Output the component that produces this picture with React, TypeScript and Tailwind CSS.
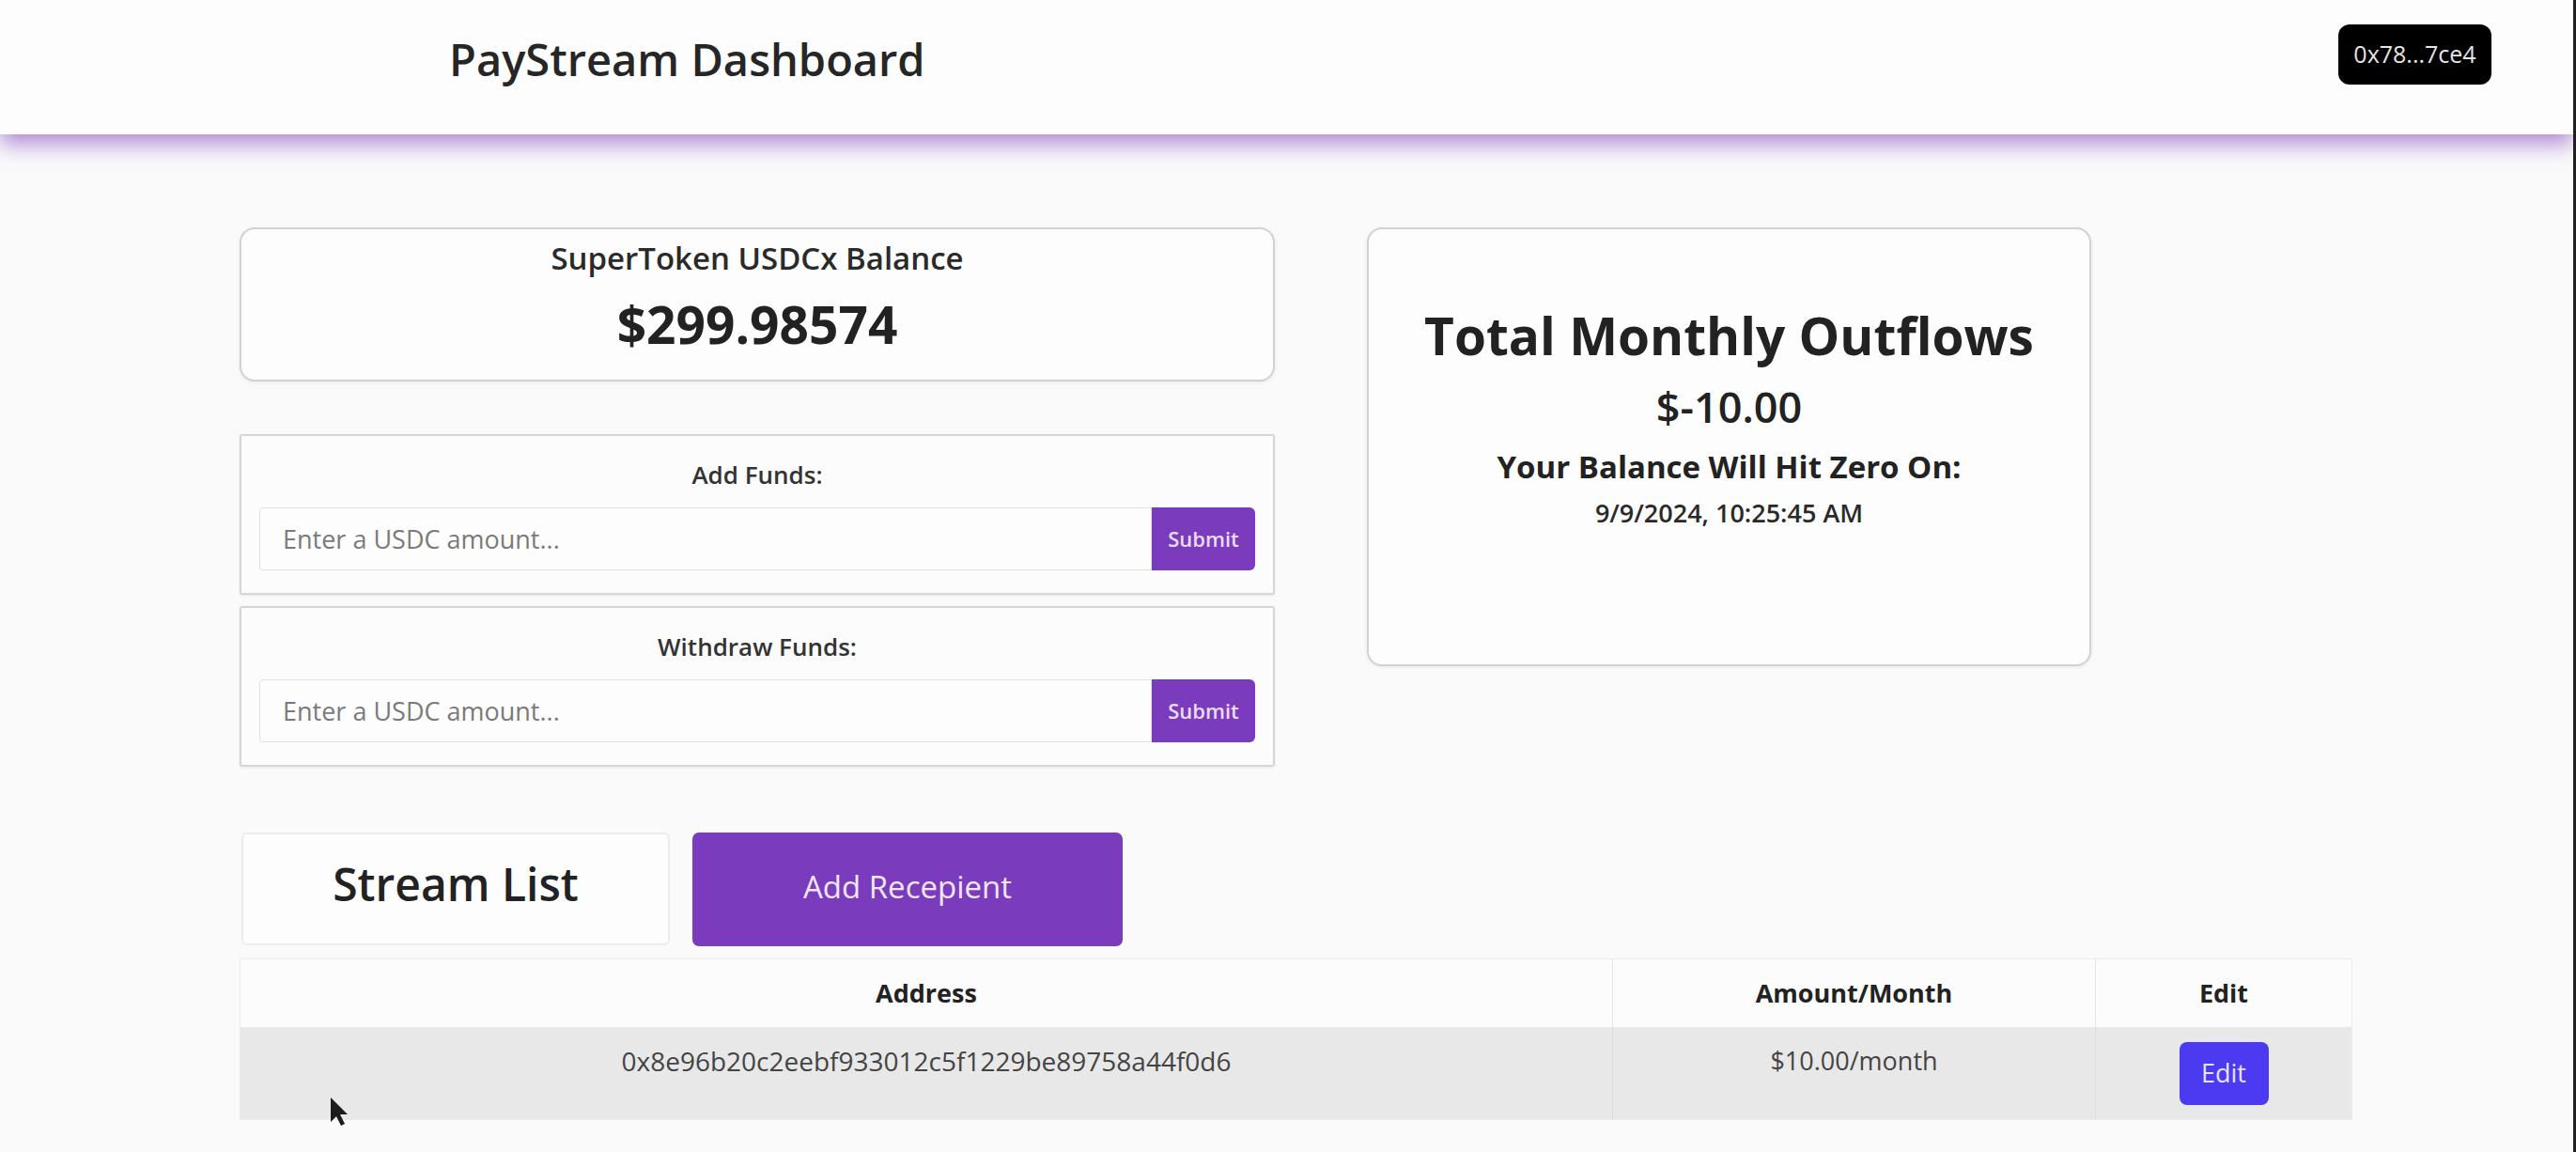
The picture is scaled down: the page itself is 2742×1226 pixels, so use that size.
import React from "react";

function FundCard({ label }: { label: string }) {
  return (
    <div className="flex h-[171px] w-full flex-col rounded-[3px] border-2 border-[#d6d6d6] bg-[#fcfcfc] px-[19px] pt-[24px] shadow-[0_1px_3px_rgba(0,0,0,0.08)]">
      <div className="text-center text-[26px] font-semibold leading-[34px] text-[#333]">{label}</div>
      <div className="mt-[18px] flex h-[67px] w-full">
        <input
          className="h-full flex-1 rounded-l-[4px] border border-[#e0e0e0] bg-[#fdfdfd] pl-[24px] text-[27px] text-[#333] placeholder:text-[#7a7a7a] outline-none"
          placeholder="Enter a USDC amount..."
        />
        <button className="h-full w-[110px] rounded-r-[6px] bg-[#7b3bbd] text-[22px] font-semibold text-[#eadcf5]">
          Submit
        </button>
      </div>
    </div>
  );
}

export default function App() {
  return (
    <div className="relative min-h-[1226px] w-full overflow-hidden border-r-[3px] border-[#1f1f1f] bg-[#fafafa] font-['Open_Sans',sans-serif] text-[#222]">
      <header className="relative z-10 flex h-[143px] items-start justify-between bg-[#fdfdfd] pl-[478px] pr-[87px] shadow-[0_10px_22px_rgba(123,59,189,0.6)]">
        <h1 className="mt-[33px] text-[47px] font-semibold leading-[60px] text-[#262626]">PayStream Dashboard</h1>
        <div className="mt-[26px] flex h-[64px] w-[163px] items-center justify-center rounded-[12px] bg-black text-[25px] font-medium text-[#e6e6e6]">
          0x78...7ce4
        </div>
      </header>

      <main className="pl-[255px] pt-[99px]">
        <div className="flex items-start gap-[98px]">
          <div className="flex w-[1102px] flex-col">
            <div className="flex h-[164px] flex-col items-center rounded-[16px] border-2 border-[#d2d2d2] bg-[#fdfdfd] pt-[11px] shadow-[0_1px_4px_rgba(0,0,0,0.08)]">
              <div className="text-[33px] font-semibold leading-[40px] text-[#2a2a2a]">SuperToken USDCx Balance</div>
              <div className="mt-[18px] text-[55px] font-bold leading-[64px] text-[#222]">$299.98574</div>
            </div>
            <div className="mt-[56px] flex flex-col gap-[12px]">
              <FundCard label="Add Funds:" />
              <FundCard label="Withdraw Funds:" />
            </div>
          </div>

          <div className="flex h-[467px] w-[771px] flex-col items-center rounded-[16px] border-2 border-[#d2d2d2] bg-[#fdfdfd] pt-[80px] shadow-[0_1px_4px_rgba(0,0,0,0.08)]">
            <div className="text-[55px] font-bold leading-[66px] text-[#222]">Total Monthly Outflows</div>
            <div className="mt-[17px] text-[45px] font-semibold leading-[52px] text-[#222]">$-10.00</div>
            <div className="mt-[18px] text-[33px] font-bold leading-[40px] text-[#222]">Your Balance Will Hit Zero On:</div>
            <div className="mt-[12px] text-[27px] font-semibold leading-[34px] text-[#2a2a2a]">9/9/2024, 10:25:45 AM</div>
          </div>
        </div>

        <div className="mt-[70px] flex items-stretch gap-[24px] pl-[2px]">
          <div className="flex h-[120px] w-[456px] items-center justify-center rounded-[6px] border-2 border-[#ececec] bg-[#fdfdfd] pb-[10px]">
            <span className="text-[48px] font-semibold leading-[60px] text-[#222]">Stream List</span>
          </div>
          <button className="flex h-[121px] w-[458px] items-center justify-center rounded-[7px] bg-[#7b3bbd] pb-[5px] text-[33px] text-[#f1e6f9]">
            Add Recepient
          </button>
        </div>

        <table className="mt-[13px] w-[2249px] border-collapse border border-[#ececec]">
          <thead>
            <tr className="h-[72px] bg-[#fcfcfc]">
              <th className="w-[1461px] border-r border-[#e6e6e6] pt-[19px] align-top text-[27px] font-bold leading-[34px] text-[#222]">Address</th>
              <th className="w-[514px] border-r border-[#e6e6e6] pt-[19px] align-top text-[27px] font-bold leading-[34px] text-[#222]">Amount/Month</th>
              <th className="pt-[19px] align-top text-[27px] font-bold leading-[34px] text-[#222]">Edit</th>
            </tr>
          </thead>
          <tbody>
            <tr className="h-[99px] bg-[#e8e8e8]">
              <td className="border-r border-[#dedede] pt-[19px] text-center align-top text-[28px] leading-[34px] text-[#444]">
                0x8e96b20c2eebf933012c5f1229be89758a44f0d6
              </td>
              <td className="border-r border-[#dedede] pt-[19px] text-center align-top text-[27px] leading-[34px] text-[#444]">
                $10.00/month
              </td>
              <td className="pt-[16px] text-center align-top">
                <button className="h-[67px] w-[95px] rounded-[8px] bg-[#4b3af0] text-[27px] text-[#e6e2ff]">Edit</button>
              </td>
            </tr>
          </tbody>
        </table>
      </main>

      <svg className="absolute left-[350px] top-[1166px]" width="24" height="34" viewBox="0 0 24 34">
        <path d="M2 2 L2 28 L8 22 L13 32 L17 30 L12 20 L20 20 Z" fill="#1c1c1c" />
      </svg>
    </div>
  );
}
